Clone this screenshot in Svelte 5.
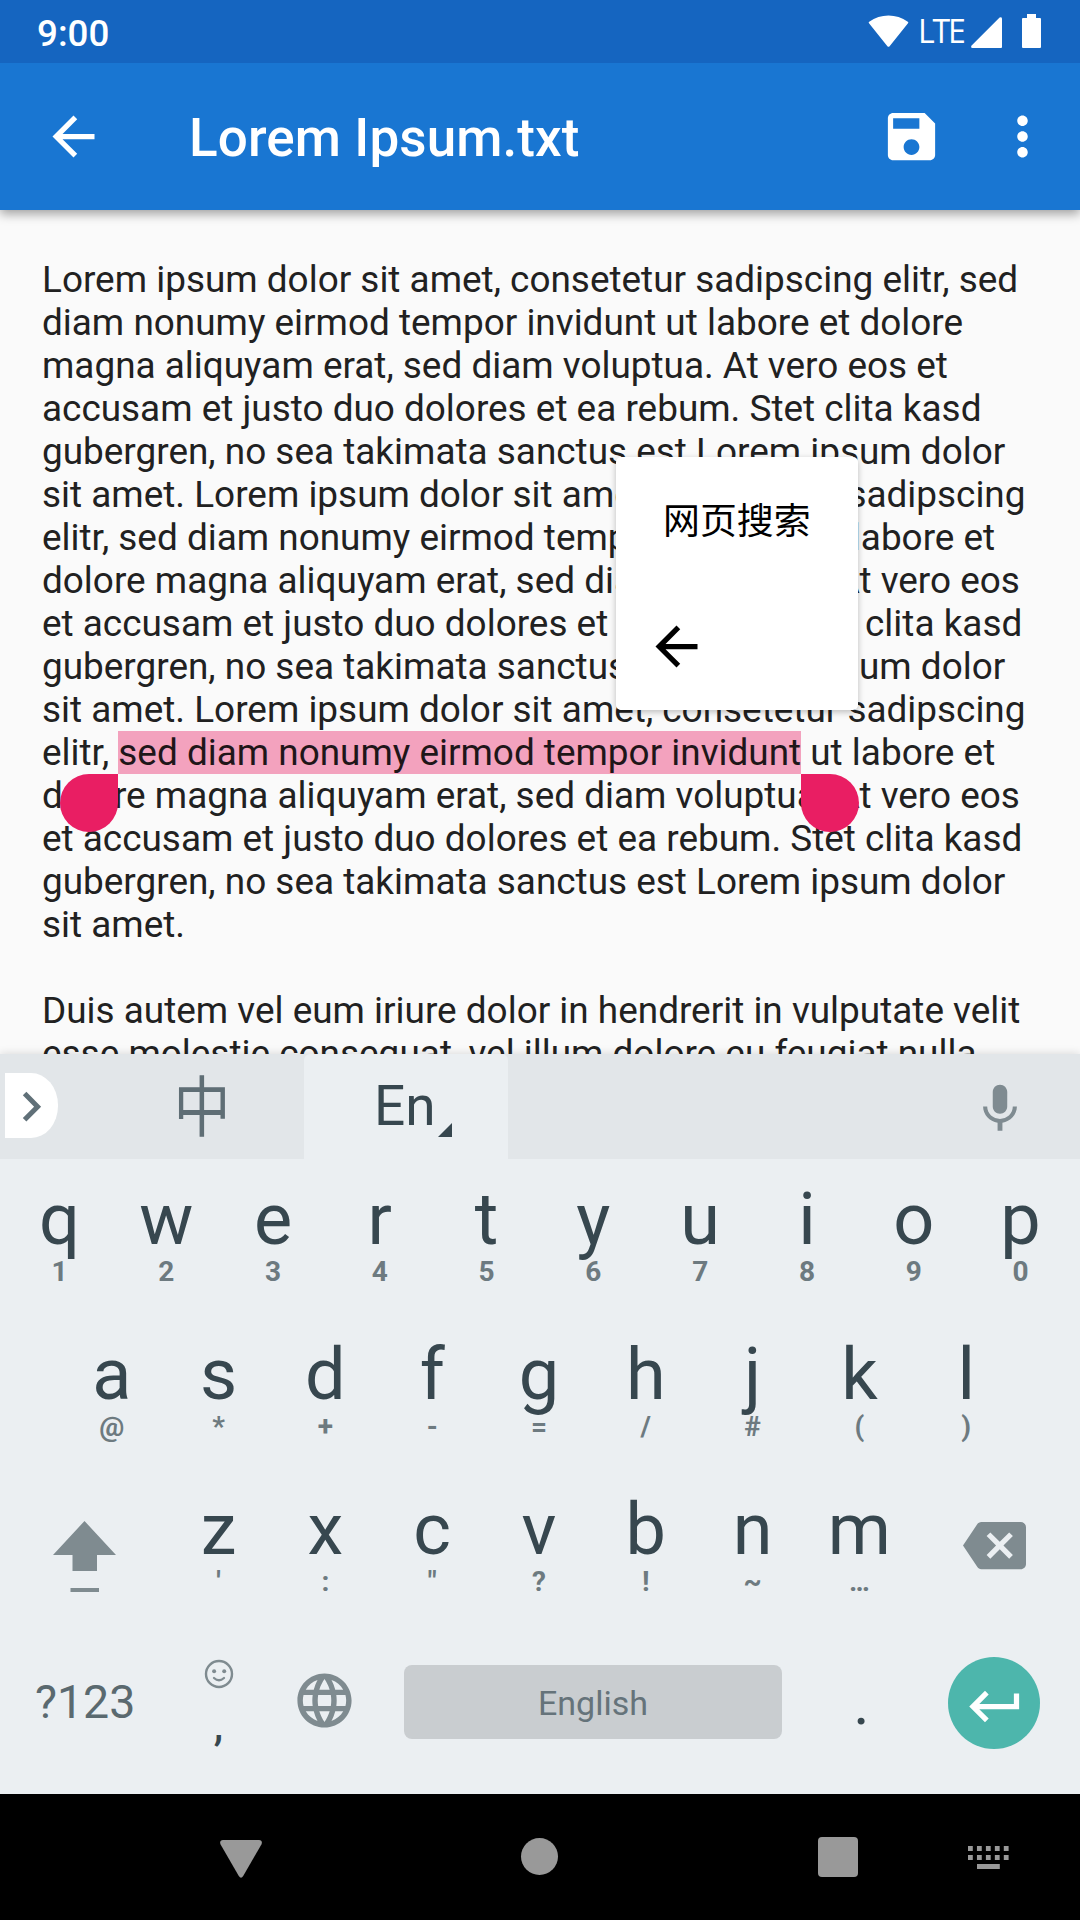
<script>
  const lines = [
    'Lorem ipsum dolor sit amet, consetetur sadipscing elitr, sed',
    'diam nonumy eirmod tempor invidunt ut labore et dolore',
    'magna aliquyam erat, sed diam voluptua. At vero eos et',
    'accusam et justo duo dolores et ea rebum. Stet clita kasd',
    'gubergren, no sea takimata sanctus est Lorem ipsum dolor',
    'sit amet. Lorem ipsum dolor sit amet, consetetur sadipscing',
    'elitr, sed diam nonumy eirmod tempor invidunt ut labore et',
    'dolore magna aliquyam erat, sed diam voluptua. At vero eos',
    'et accusam et justo duo dolores et ea rebum. Stet clita kasd',
    'gubergren, no sea takimata sanctus est Lorem ipsum dolor',
    'sit amet. Lorem ipsum dolor sit amet, consetetur sadipscing'
  ];
  const selected = { before: 'elitr, ', text: 'sed diam nonumy eirmod tempor invidunt', after: ' ut labore et' };
  const rest = [
    'dolore magna aliquyam erat, sed diam voluptua. At vero eos',
    'et accusam et justo duo dolores et ea rebum. Stet clita kasd',
    'gubergren, no sea takimata sanctus est Lorem ipsum dolor',
    'sit amet.',
    '',
    'Duis autem vel eum iriure dolor in hendrerit in vulputate velit',
    'esse molestie consequat, vel illum dolore eu feugiat nulla'
  ];
  const pair = (letters, hints) => [...letters].map((c, i) => ({ c, h: hints[i] }));
  const row1 = pair('qwertyuiop', '1234567890');
  const row2 = pair('asdfghjkl', '@*+-=/#()');
  const row3 = pair('zxcvbnm', '\':"?!~…');
</script>

{#snippet key(k)}
  <div class="key">
    <span class="letter">{k.c}</span>
    <span class="hint">{k.h}</span>
  </div>
{/snippet}

{#snippet arrow()}
  <svg class="icon" viewBox="0 0 24 24"><path d="M20 11H7.83l5.59-5.59L12 4l-8 8 8 8 1.41-1.41L7.83 13H20v-2z" /></svg>
{/snippet}

<div class="screen">
  <header class="status">
    <span class="time">9:00</span>
    <svg class="wifi" viewBox="0 0 41 33"><path d="M1.2 8.6Q0 7.6 1.2 6.8Q10 .5 20.5 .5T39.8 6.8Q41 7.6 39.8 8.6L21.6 31.2Q20.5 32.4 19.4 31.2Z" /></svg>
    <span class="lte">LTE</span>
    <svg class="signal" viewBox="0 0 31 31"><path d="M31 1.5V30a1 1 0 0 1-1 1H1.5Q-.8 30.4 .6 28.4L28.6 .6Q30.6-.6 31 1.5Z" /></svg>
    <svg class="battery" viewBox="0 0 19 34"><path d="M5 0h9v4h4a1 1 0 0 1 1 1v28a1 1 0 0 1-1 1H1a1 1 0 0 1-1-1V5a1 1 0 0 1 1-1h4z" /></svg>
  </header>

  <nav class="toolbar">
    {@render arrow()}
    <h1>Lorem Ipsum.txt</h1>
    <svg class="icon save" viewBox="0 0 24 24"><path d="M17 3H5c-1.11 0-2 .9-2 2v14c0 1.1.89 2 2 2h14c1.1 0 2-.9 2-2V7l-4-4zm-5 16c-1.66 0-3-1.34-3-3s1.34-3 3-3 3 1.34 3 3-1.34 3-3 3zm3-10H5V5h10v4z" /></svg>
    <svg class="icon more" viewBox="0 0 24 24"><path d="M12 8c1.1 0 2-.9 2-2s-.9-2-2-2-2 .9-2 2 .9 2 2 2zm0 2c-1.1 0-2 .9-2 2s.9 2 2 2 2-.9 2-2-.9-2-2-2zm0 6c-1.1 0-2 .9-2 2s.9 2 2 2 2-.9 2-2-.9-2-2-2z" /></svg>
  </nav>

  <main class="editor">
    {#each lines as line}<div class="line">{line}</div>{/each}
    <div class="line">{selected.before}<span class="selection">{selected.text}<i class="handle start"></i><i class="handle end"></i></span>{selected.after}</div>
    {#each rest as line}<div class="line">{line}</div>{/each}
    <div class="popup">
      <span>网页搜索</span>
      {@render arrow()}
    </div>
  </main>

  <section class="keyboard">
    <div class="tabs">
      <div class="expand">
        <svg viewBox="0 0 20 32"><path d="M2.6 2.6 15.6 15.7 2.6 28.8" /></svg>
      </div>
      <div class="tab zh"><span>中</span></div>
      <div class="tab active">
        <span>En</span>
        <svg viewBox="0 0 14 14"><path d="M14 0V14H0Z" /></svg>
      </div>
      <svg class="mic" viewBox="0 0 24 24"><path d="M12 14c1.66 0 2.99-1.34 2.99-3L15 5c0-1.66-1.34-3-3-3S9 3.34 9 5v6c0 1.66 1.34 3 3 3zm5.3-3c0 3-2.54 5.1-5.3 5.1S6.7 14 6.7 11H5c0 3.41 2.72 6.23 6 6.72V21h2v-3.28c3.28-.48 6-3.3 6-6.72h-1.7z" /></svg>
    </div>

    <div class="row">{#each row1 as k}{@render key(k)}{/each}</div>
    <div class="row inset">{#each row2 as k}{@render key(k)}{/each}</div>
    <div class="row inset">
      <div class="wide">
        <svg class="shift" viewBox="0 0 63 71"><path d="M31.5 0 63 34H44V50H19.5V34H0ZM17.5 67H46v4H17.5z" /></svg>
      </div>
      {#each row3 as k}{@render key(k)}{/each}
      <div class="wide right">
        <svg class="icon" viewBox="0 0 24 24"><path d="M22 3H7c-.69 0-1.23.35-1.59.88L0 12l5.41 8.11c.36.53.9.89 1.59.89h15c1.1 0 2-.9 2-2V5c0-1.1-.9-2-2-2zm-3 12.59L17.59 17 14 13.41 10.41 17 9 15.59 12.59 12 9 8.41 10.41 7 14 10.59 17.59 7 19 8.41 15.41 12 19 15.59z" /></svg>
      </div>
    </div>
    <div class="row bottom">
      <div class="symbols">?123</div>
      <div class="comma">
        <svg viewBox="0 0 30 30">
          <circle cx="15" cy="15" r="13" fill="none" stroke="#7f8b90" stroke-width="2.4" />
          <circle cx="10.1" cy="12.3" r="2" />
          <circle cx="20.2" cy="12.3" r="2" />
          <path d="M10 19Q15 23.4 20 19" fill="none" stroke="#7f8b90" stroke-width="2.3" stroke-linecap="round" />
        </svg>
        <span>,</span>
      </div>
      <svg class="globe" viewBox="0 0 24 24"><path d="M11.99 2C6.47 2 2 6.48 2 12s4.47 10 9.99 10C17.52 22 22 17.52 22 12S17.52 2 11.99 2zm6.93 6h-2.95c-.32-1.25-.78-2.45-1.38-3.56 1.84.63 3.37 1.91 4.33 3.56zM12 4.04c.83 1.2 1.48 2.53 1.91 3.96h-3.82c.43-1.43 1.08-2.76 1.91-3.96zM4.26 14C4.1 13.36 4 12.69 4 12s.1-1.36.26-2h3.38c-.08.66-.14 1.32-.14 2s.06 1.34.14 2H4.26zm.82 2h2.95c.32 1.25.78 2.45 1.38 3.56-1.84-.63-3.37-1.9-4.33-3.56zm2.95-8H5.08c.96-1.66 2.49-2.93 4.33-3.56C8.81 5.55 8.35 6.75 8.03 8zM12 19.96c-.83-1.2-1.48-2.53-1.91-3.96h3.82c-.43 1.43-1.08 2.76-1.91 3.96zM14.34 14H9.66c-.09-.66-.16-1.32-.16-2s.07-1.35.16-2h4.68c.09.65.16 1.32.16 2s-.07 1.34-.16 2zm.25 5.56c.6-1.11 1.06-2.31 1.38-3.56h2.95c-.96 1.65-2.49 2.93-4.33 3.56zM16.36 14c.08-.66.14-1.32.14-2s-.06-1.34-.14-2h3.38c.16.64.26 1.31.26 2s-.1 1.36-.26 2h-3.38z" /></svg>
      <div class="space">English</div>
      <div class="period">.</div>
      <div class="enter">
        <svg class="icon" viewBox="0 0 24 24"><path d="M19 7v4H5.83l3.58-3.59L8 6l-6 6 6 6 1.41-1.41L5.83 13H21V7z" /></svg>
      </div>
    </div>
  </section>

  <footer class="navbar">
    <svg class="back" viewBox="0 0 42 38"><path d="M3 0H39Q43 .4 41.4 4.4L23.2 36Q21 39.4 18.8 36L.6 4.4Q-1 .4 3 0Z" /></svg>
    <div class="home"></div>
    <div class="recent"></div>
    <svg class="ime" viewBox="0 0 41 24">
      {#each [0, 1, 2, 3, 4] as i}
        <rect x={i * 8.95} y="0" width="4.8" height="5" />
        <rect x={i * 8.95} y="9" width="4.8" height="5" />
      {/each}
      <rect x="9" y="18" width="22.8" height="5" />
    </svg>
  </footer>
</div>

<style>
  :global(body) { margin: 0; background: #000; }
  .screen {
    width: 1080px;
    height: 1920px;
    display: flex;
    flex-direction: column;
    overflow: hidden;
    font-family: Roboto, "Noto Sans CJK SC", sans-serif;
  }
  svg { display: block; flex: none; fill: currentColor; overflow: visible; }
  .icon { width: 63px; height: 63px; }

  .status {
    height: 63px;
    flex: none;
    box-sizing: border-box;
    padding: 0 39px 0 37px;
    display: flex;
    align-items: flex-start;
    background: #1565c0;
    color: #fff;
    position: relative;
    z-index: 3;
  }
  .time { font-size: 36.75px; font-weight: 500; line-height: 43px; margin-top: 12px; flex: 1; }
  .wifi { width: 41px; height: 33px; margin-top: 15px; }
  .lte { font: 32px/40px "Open Sans", sans-serif; letter-spacing: -2.2px; width: 53px; margin: 11px 0 0 9px; }
  .signal { width: 31px; height: 31px; margin-top: 17px; }
  .battery { width: 19px; height: 34px; margin: 14px 0 0 20px; }

  .toolbar {
    height: 147px;
    flex: none;
    box-sizing: border-box;
    padding: 0 26px 0 42px;
    display: flex;
    align-items: center;
    background: #1976d2;
    color: #fff;
    position: relative;
    z-index: 2;
    box-shadow: 0 4px 10px rgba(0, 0, 0, 0.36);
  }
  h1 { margin: 2px 0 0 84px; flex: 1; font-size: 53px; font-weight: 500; line-height: 62px; letter-spacing: 0.1px; }
  .more { margin-left: 48px; }

  .editor {
    height: 844px;
    flex: none;
    box-sizing: border-box;
    padding: 48px 0 0 42px;
    background: #fafafa;
    color: #212121;
    font-size: 36.92px;
    position: relative;
    overflow: hidden;
  }
  .line { height: 43px; line-height: 43px; white-space: pre; }
  .selection { position: relative; display: inline-block; height: 43px; background: rgba(233, 30, 99, 0.4); color: #1f1619; }
  .handle { position: absolute; top: 43px; width: 58px; height: 58px; background: #e91e63; z-index: 1; }
  .start { right: 100%; border-radius: 50% 0 50% 50%; }
  .end { left: 100%; border-radius: 0 50% 50% 50%; }

  .popup {
    position: absolute;
    left: 616px;
    top: 247px;
    width: 242px;
    height: 253px;
    box-sizing: border-box;
    padding: 38px 0 0 29px;
    display: flex;
    flex-direction: column;
    gap: 66px;
    background: #fff;
    color: #000;
    border-radius: 5px;
    box-shadow: 0 2px 6px rgba(0, 0, 0, 0.25);
  }
  .popup span { line-height: 54px; padding-left: 18px; }

  .keyboard {
    height: 740px;
    flex: none;
    background: #ebeff2;
    color: #37474f;
    position: relative;
    z-index: 1;
    box-shadow: 0 -1px 8px rgba(0, 0, 0, 0.12);
  }
  .tabs { height: 105px; display: flex; background: #e2e6e9; }
  .expand {
    width: 53px;
    height: 65px;
    box-sizing: border-box;
    margin: 19px 0 0 5px;
    padding: 18px 0 0 17px;
    background: #fff;
    color: #607078;
    border-radius: 0 27px 27px 0 / 0 32px 32px 0;
  }
  .expand svg { width: 20px; height: 32px; fill: none; stroke: currentColor; stroke-width: 5; }
  .zh { width: 204px; margin: 0 0 0 42px; padding-right: 0; box-sizing: border-box; padding-left: 0; display: flex; justify-content: center; font-size: 57px; font-weight: 400; line-height: 105px; color: #5f6e75; }
  .zh span { transform: translateY(2px) scaleY(1.16); }
  .active { width: 204px; box-sizing: border-box; padding: 19px 0 0 70px; display: flex; background: #ebeff2; border-radius: 6px 6px 0 0; }
  .active span { font-size: 55px; line-height: 66px; width: 64px; }
  .active svg { width: 14px; height: 14px; margin-top: 50px; }
  .mic { width: 58px; height: 58px; margin: 26px 0 0 463px; color: #7f8b91; }

  .row { height: 155px; display: flex; justify-content: center; }
  .inset { padding-right: 2px; }
  .key { width: 106.8px; display: flex; flex-direction: column; align-items: center; }
  .letter { font-size: 72px; line-height: 84px; margin-top: 19px; }
  .hint { font-size: 28px; font-weight: 700; line-height: 32px; margin-top: -6px; color: #6d7a80; }
  .wide { width: 160.5px; flex: none; color: #7f8b90; }
  .shift { width: 63px; height: 71px; margin: 52px 0 0 48px; }
  .right .icon { margin: 45px 0 0 50px; }

  .bottom { justify-content: flex-start; }
  .symbols { width: 165px; box-sizing: border-box; padding: 50px 0 0 35px; font-size: 46.5px; line-height: 56px; color: #5a696f; }
  .comma { width: 107px; display: flex; flex-direction: column; align-items: center; }
  .comma svg { width: 30px; height: 30px; margin-top: 35px; color: #7f8b90; }
  .comma span { font-size: 42px; font-weight: 500; line-height: 60px; margin-top: 7px; }
  .globe { width: 65px; height: 65px; margin: 44px 0 0 20px; color: #7f8b90; }
  .space {
    width: 378px;
    height: 74px;
    margin: 41px 0 0 47px;
    border-radius: 8px;
    background: #c9cdd0;
    color: #65737a;
    font-size: 34px;
    line-height: 76px;
    text-align: center;
  }
  .period { width: 107px; margin: 37px 0 0 26px; text-align: center; font-size: 62px; line-height: 84px; }
  .enter {
    width: 92px;
    height: 92px;
    box-sizing: border-box;
    margin: 33px 0 0 33px;
    padding: 18px 0 0 15.5px;
    border-radius: 50%;
    background: #4db6ac;
    color: #fff;
  }

  .navbar { height: 126px; flex: none; display: flex; background: #000; color: #999; }
  .back { width: 42px; height: 38px; margin: 46px 0 0 220px; }
  .home { width: 37px; height: 37px; margin: 44px 0 0 259px; border-radius: 50%; background: #999; }
  .recent { width: 40px; height: 40px; margin: 43px 0 0 260px; border-radius: 4px; background: #999; }
  .ime { width: 41px; height: 24px; margin: 52px 0 0 110px; }
</style>
